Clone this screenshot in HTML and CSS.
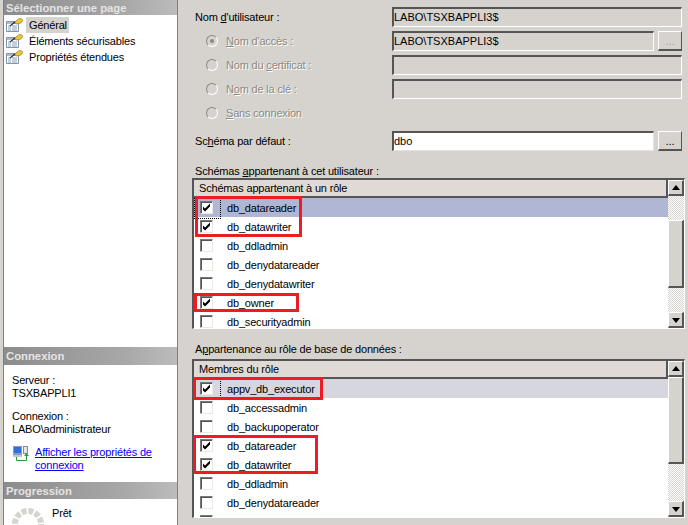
FILE: index.html
```html
<!DOCTYPE html>
<html lang="fr">
<head>
<meta charset="utf-8">
<title>Propriétés de l'utilisateur</title>
<link rel="stylesheet" href="styles.css">
</head>
<body>
<svg class="defs" width="0" height="0" aria-hidden="true">
  <symbol id="page" viewBox="0 0 17 14">
    <path d="M.5 3.5h12v10H.5z" fill="#fff" stroke="#7f93ab"/>
    <path d="M1 4h11v2H1z" fill="#a9bdd6"/>
    <path d="M2 8h3M6 8h5M2 10h3M6 10h5M2 12h3M6 12h5" stroke="#8a9cb4"/>
    <path d="M8 5l3-3 3-2 3 2-2 3-4 1z" fill="#f0c430" stroke="#8a7420" stroke-width=".6"/>
    <path d="M4 8l5-4" stroke="#2a2a2a" stroke-width="1.2"/>
  </symbol>
  <symbol id="check" viewBox="0 0 13 13">
    <path d="M3 5.5l2 2 5-5v3l-5 5-2-2z" fill="#000"/>
  </symbol>
</svg>
<main class="window">
  <aside class="side">
    <section class="nav">
      <h2 class="band">Sélectionner une page</h2>
      <ul class="pages">
        <li><svg class="ico"><use href="#page"/></svg><span class="sel">Général</span></li>
        <li><svg class="ico"><use href="#page"/></svg><span>Éléments sécurisables</span></li>
        <li><svg class="ico"><use href="#page"/></svg><span>Propriétés étendues</span></li>
      </ul>
    </section>
    <section class="conn">
      <h2 class="band">Connexion</h2>
      <div class="conn-body">
        <p>Serveur :<br>TSXBAPPLI1</p>
        <p>Connexion :<br>LABO\administrateur</p>
        <div class="link-row">
          <svg class="conn-ico" viewBox="0 0 17 15">
            <rect x="1" y="0" width="9" height="9" fill="#8f9cb8"/>
            <rect x="2" y="1" width="7" height="6" fill="#2f6fe0"/>
            <rect x="1" y="9" width="9" height="2" fill="#c2c6d2"/>
            <rect x="11.5" y=".5" width="4" height="7" fill="#e4e6ee" stroke="#7f8aa0"/>
            <path d="M4.500 11v3.500h10V9" fill="none" stroke="#2f9a2f"/>
            <path d="M12 10l2.500-3 2.500 3z" fill="#2f9a2f"/>
          </svg>
          <a href="#">Afficher les propriétés de connexion</a>
        </div>
      </div>
    </section>
    <section class="prog">
      <h2 class="band">Progression</h2>
      <div class="prog-body">
        <svg class="spinner" viewBox="0 0 32 32"><circle cx="16" cy="16" r="13" fill="none" stroke="#d6d4d0" stroke-width="6" stroke-dasharray="5 1.800"/></svg>
        <span>Prêt</span>
      </div>
    </section>
  </aside>
  <div class="form">
    <div class="field f-user">
      <label class="lab">Nom <u>d</u>'utilisateur :</label>
      <div class="ro box">LABO\TSXBAPPLI3$</div>
    </div>
    <div class="field">
      <label class="opt"><i class="radio on"></i><span><u>N</u>om d'accès :</span></label>
      <div class="ro box short">LABO\TSXBAPPLI3$</div>
      <button class="more dim">...</button>
    </div>
    <div class="field">
      <label class="opt"><i class="radio"></i><span>Nom du <u>c</u>ertificat :</span></label>
      <div class="ro box"></div>
    </div>
    <div class="field">
      <label class="opt"><i class="radio"></i><span>N<u>o</u>m de la clé :</span></label>
      <div class="ro box"></div>
    </div>
    <div class="field">
      <label class="opt"><i class="radio"></i><span><u>S</u>ans connexion</span></label>
    </div>
    <div class="field f-schema">
      <label class="lab">Sc<u>h</u>éma par défaut :</label>
      <div class="box short edit">dbo</div>
      <button class="more">...</button>
    </div>
    <div class="caption c1">Schémas <u>a</u>ppartenant à cet utilisateur :</div>
    <div class="list l1">
      <div class="list-main">
        <div class="head">Schémas appartenant à un rôle</div>
        <div class="row hi blue"><span class="cb"><svg><use href="#check"/></svg></span><span class="name">db_datareader</span></div>
        <div class="row"><span class="cb"><svg><use href="#check"/></svg></span><span class="name">db_datawriter</span></div>
        <div class="row"><span class="cb"></span><span class="name">db_ddladmin</span></div>
        <div class="row"><span class="cb"></span><span class="name">db_denydatareader</span></div>
        <div class="row"><span class="cb"></span><span class="name">db_denydatawriter</span></div>
        <div class="row"><span class="cb"><svg><use href="#check"/></svg></span><span class="name">db_owner</span></div>
        <div class="row"><span class="cb"></span><span class="name">db_securityadmin</span></div>
      </div>
      <div class="scroll">
        <button class="arrow up"></button>
        <div class="track"><div class="sp1"></div><div class="thumb t1"></div><div class="sp2"></div></div>
        <button class="arrow down"></button>
      </div>
      <i class="mark m1"></i><i class="mark m2"></i>
    </div>
    <div class="caption c2">A<u>p</u>partenance au rôle de base de données :</div>
    <div class="list l2">
      <div class="list-main">
        <div class="head">Membres du rôle</div>
        <div class="row hi grey"><span class="cb"><svg><use href="#check"/></svg></span><span class="name">appv_db_executor</span></div>
        <div class="row"><span class="cb"></span><span class="name">db_accessadmin</span></div>
        <div class="row"><span class="cb"></span><span class="name">db_backupoperator</span></div>
        <div class="row"><span class="cb"><svg><use href="#check"/></svg></span><span class="name">db_datareader</span></div>
        <div class="row"><span class="cb"><svg><use href="#check"/></svg></span><span class="name">db_datawriter</span></div>
        <div class="row"><span class="cb"></span><span class="name">db_ddladmin</span></div>
        <div class="row"><span class="cb"></span><span class="name">db_denydatareader</span></div>
        <div class="row"><span class="cb"></span><span class="name">db_denydatawriter</span></div>
      </div>
      <div class="scroll">
        <button class="arrow up"></button>
        <div class="track"><div class="thumb t2"></div><div class="sp2"></div></div>
        <button class="arrow down"></button>
      </div>
      <i class="mark m3"></i><i class="mark m4"></i>
    </div>
  </div>
</main>
</body>
</html>
```
FILE: styles.css
```css
* { box-sizing: border-box; }
html, body { margin: 0; padding: 0; }
body { width: 688px; height: 525px; overflow: hidden; background: #d6d3ce; font: 11px/13px "Liberation Sans", Arial, sans-serif; letter-spacing: -.18px; color: #000; }
.defs { position: absolute; }
u { text-decoration: underline; }
.window { display: flex; height: 525px; }

.side { width: 178px; flex: none; height: 525px; padding-left: 3px; display: flex; flex-direction: column; }
.side section { background: #fff; border-right: 1px solid #808080; border-left: 1px solid #808080; flex: none; }
.band { margin: 0; height: 18px; padding-left: 2px; font: bold 11.3px/18px "Liberation Sans", Arial, sans-serif; letter-spacing: 0; color: #e4e4e4; background: linear-gradient(90deg, #8c8c8c, #a8a8a8 70%, #bcbcbc); }
.nav { height: 347px; }
.nav .band { height: 15px; line-height: 17px; overflow: hidden; }
.pages { list-style: none; margin: 0; padding: 2px 0 0; }
.pages li { height: 16px; display: flex; align-items: center; gap: 3px; padding-left: 2px; }
.pages span { height: 16px; line-height: 16px; padding: 0 2px 0 3px; }
.ico { width: 17px; height: 14px; flex: none; }
.sel { background: #d6d3ce; }
.conn { height: 135px; }
.conn-body { padding: 9px 0 0 8px; }
.conn-body p { margin: 0 0 10px; }
.link-row { display: flex; gap: 6px; }
.conn-ico { width: 17px; height: 15px; flex: none; }
.link-row a { color: #0000ff; }
.prog { height: 43px; overflow: hidden; }
.prog .band { height: 17px; }
.prog-body { position: relative; height: 26px; padding: 8px 0 0 48px; }
.spinner { position: absolute; left: 8px; top: 9px; width: 32px; height: 32px; }

.form { flex: 1; min-width: 0; }
.field { display: flex; align-items: center; height: 20px; margin-bottom: 4px; }
.lab { width: 214px; padding-left: 17px; flex: none; }
.opt { width: 214px; padding-left: 28px; flex: none; display: flex; align-items: center; gap: 8px; color: #8c8a84; text-shadow: 1px 1px 0 #fff; }
.f-user { margin-top: 7px; }
.f-schema { margin-top: 8px; margin-bottom: 0; }
.box { width: 290px; height: 20px; border: solid; border-color: #555 #fff #fff #555; border-width: 2px 1px 1px 2px; padding-left: 0; line-height: 17px; letter-spacing: 0; }
.short { width: 262px; }
.edit { background: #fff; border-right-color: #e6e3dc; border-bottom-color: #e6e3dc; }
.more { width: 24px; height: 20px; margin: 0 0 0 4px; padding: 0; background: #d6d3ce; border: 1px solid; border-color: #fff #555 #555 #fff; border-bottom-width: 2px; font: 11px/14px "Liberation Sans", sans-serif; color: #000; }
.more.dim { color: #a0a09a; }
.radio { width: 12px; height: 12px; border-radius: 50%; border: 1px solid #8a8780; border-right-color: #fff; border-bottom-color: #fff; background: #d6d3ce; flex: none; position: relative; }
.radio.on::after { content: ""; position: absolute; left: 3px; top: 3px; width: 4px; height: 4px; border-radius: 50%; background: #8a8780; }
.caption { padding: 1px 0 0 17px; }
.c1 { margin-top: 13px; height: 14px; }
.c2 { margin-top: 13px; height: 17px; }
.list { position: relative; margin-left: 14px; width: 493px; display: flex; border: solid; border-color: #555 #fff #fff #555; border-width: 2px 1px 1px 2px; background: #fff; }
.l1 { height: 151px; }
.l2 { height: 159px; }
.list-main { flex: 1; min-width: 0; height: 100%; overflow: hidden; }
.head { height: 18px; padding-left: 5px; line-height: 16px; background: #e0dad6; border-bottom: 2px solid #555; border-right: 2px solid #555; }
.row { position: relative; height: 19px; display: flex; align-items: center; padding-left: 6px; gap: 14px; }
.name { padding-top: 1px; }
.hi::after { content: ""; position: absolute; left: 0; top: 0; width: 25px; height: 19px; border: 1px dotted #000; }
.blue { background: #b0b7d4; }
.grey { background: #d6d6de; }
.cb { width: 13px; height: 13px; flex: none; border: 1px solid; border-color: #7a7a7a #ebe8e2 #ebe8e2 #7a7a7a; background: #fff; box-shadow: inset 1px 1px 0 #555; position: relative; }
.cb svg { position: absolute; left: -1px; top: -1px; width: 13px; height: 13px; }
.scroll { width: 16px; flex: none; display: flex; flex-direction: column; }
.arrow { height: 16px; padding: 0; flex: none; border: 1px solid; border-color: #fff #555 #555 #fff; border-width: 1px 2px 2px 1px; background: #d6d3ce; position: relative; }
.arrow::after { content: ""; position: absolute; left: 3px; border: 4px solid transparent; }
.up::after { top: 0; border-bottom: 5px solid #000; }
.down::after { top: 5px; border-top: 5px solid #000; }
.track { flex: 1; display: flex; flex-direction: column; background: repeating-conic-gradient(#fff 0 25%, #d6d3ce 0 50%) 0 0 / 2px 2px; }
.sp1 { height: 24px; }
.sp2 { flex: 1; }
.thumb { background: #d6d3ce; border: solid; border-color: #fff #555 #555 #fff; border-width: 1px 2px 2px 1px; }
.t1 { height: 68px; }
.t2 { height: 87px; }
.mark { position: absolute; border: 3px solid #ed1c24; pointer-events: none; }
.m1 { left: 1px; top: 16px; width: 107px; height: 41px; }
.m2 { left: 0; top: 113px; width: 105px; height: 19px; }
.m3 { left: -1px; top: 16px; width: 130px; height: 23px; }
.m4 { left: -1px; top: 74px; width: 125px; height: 39px; }
```
